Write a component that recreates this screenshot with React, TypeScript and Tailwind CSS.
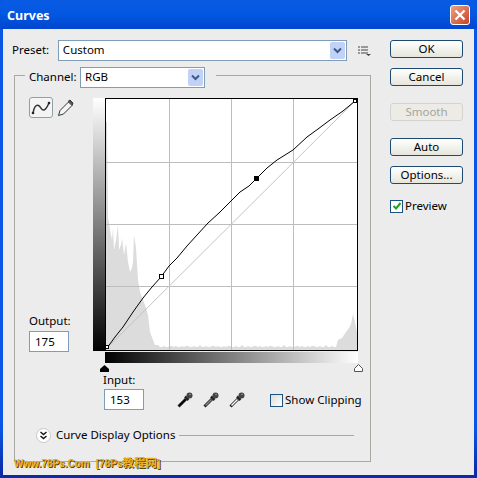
const font = "[font-family:'Noto_Sans',Tahoma,sans-serif]";

const curve =
  "107,348 115,337 123,327 133,312 143,298 152,287 161,277 169,266 177,258 187,246 197,235 208,223 219,213 230,202 240,192 249,186 257,178 267,168 277,160 293,150 307,137 318,129 330,120 343,111 355,101";

// floor of the histogram, small jitter so the top edge looks noisy
const floor = Array.from({ length: 90 }, (_, i) => {
  const x = 158 + i * 2;
  const y = 347 - (i % 3 === 0 ? 1 : 0) - (i % 7 === 0 ? 1 : 0);
  return `${x},${y}`;
}).join(" ");

const histogram =
  "106,350 106,122 107,122 108,217 110,230 112,240 113,228 114,250 116,240 118,225 119,250 121,245 122,238 124,255 126,243 128,262 130,272 132,268 133,262 134,235 136,248 138,280 140,292 143,300 146,308 148,315 150,332 153,340 155,345 " +
  floor +
  " 338,340 342,338 346,332 349,328 351,324 353,314 355,322 357,332 357,350";

function PushButton({ label, disabled, className }: { label: string; disabled?: boolean; className?: string }) {
  return (
    <button
      className={`h-[18px] w-[73px] rounded-[3px] border text-[11.5px] leading-none ${
        disabled
          ? "border-[#d4d4cf] bg-[#ecebe6] text-[#a5a59c]"
          : "border-[#1c4a72] bg-gradient-to-b from-white to-[#e6e6dc] text-black"
      } ${className ?? ""}`}
    >
      {label}
    </button>
  );
}

function ComboBox({ value, className }: { value: string; className: string }) {
  return (
    <div className={`flex items-center border border-[#7f9db9] bg-white pl-[4px] pr-px ${className}`}>
      <span className="flex-1 pb-[2px] text-black">{value}</span>
      <span className="flex h-[17px] w-[15px] items-center justify-center rounded-[2px] bg-[#c1d2f6]">
        <svg width="9" height="7" viewBox="0 0 9 7">
          <path d="M1 1.500 4.500 5 8 1.500" fill="none" stroke="#3c5a8c" strokeWidth="2" />
        </svg>
      </span>
    </div>
  );
}

function Eyedropper({ fill }: { fill: string }) {
  return (
    <svg width="17" height="17" viewBox="0 0 17 17">
      <path d="M1.500 15.500 9 8" stroke="#222" strokeWidth="3" />
      <path d="M2.500 14.500 8.500 8.500" stroke={fill} strokeWidth="1.500" />
      <path d="M8 5.500 11.500 9" stroke="#222" strokeWidth="2.500" />
      <circle cx="12.500" cy="4.500" r="3" fill="#444" />
      <circle cx="13" cy="3.500" r="0.800" fill="#999" />
    </svg>
  );
}

function CurveGraph() {
  return (
    <svg width="272" height="279" viewBox="92 97 272 279" className="block shrink-0">
      <defs>
        <linearGradient id="vert" x1="0" y1="0" x2="0" y2="1">
          <stop offset="0" stopColor="#fff" />
          <stop offset="1" stopColor="#000" />
        </linearGradient>
        <linearGradient id="horiz" x1="0" y1="0" x2="1" y2="0">
          <stop offset="0" stopColor="#000" />
          <stop offset="1" stopColor="#fff" />
        </linearGradient>
      </defs>
      <rect x="93" y="98" width="12" height="253" fill="url(#vert)" />
      <rect x="105" y="352" width="253" height="11" fill="url(#horiz)" />
      <rect x="105.500" y="98.500" width="252" height="252" fill="#fff" />
      <polygon points={histogram} fill="#dcdcdc" />
      {[169, 231, 293].map((x) => (
        <line key={x} x1={x + 0.5} y1="99" x2={x + 0.5} y2="350" stroke="#bdbdbd" />
      ))}
      {[162, 224, 286].map((y) => (
        <line key={y} x1="106" y1={y + 0.5} x2="357" y2={y + 0.5} stroke="#bdbdbd" />
      ))}
      <line x1="107" y1="348" x2="355" y2="101" stroke="#c4c4c4" />
      <polyline points={curve} fill="none" stroke="#000" strokeWidth="1" />
      <rect x="105.500" y="98.500" width="252" height="252" fill="none" stroke="#000" />
      <rect x="105.500" y="345.500" width="3" height="3" fill="#fff" stroke="#000" />
      <rect x="353.500" y="99.500" width="3" height="3" fill="#fff" stroke="#000" />
      <rect x="159.500" y="274.500" width="4" height="4" fill="#fff" stroke="#000" />
      <rect x="254" y="176" width="5" height="5" fill="#000" />
      <path d="M100 372v-3l4.500-4 4.500 4v3z" fill="#000" />
      <path d="M354.500 371.500v-3l4-4 4 4v3z" fill="#fff" stroke="#555" />
    </svg>
  );
}

export default function App() {
  return (
    <div className={`flex h-[478px] w-[477px] flex-col overflow-hidden bg-gradient-to-b from-[#0a55e4] from-90% to-[#0a2aa8] to-[99%] ${font}`}>
      {/* title bar */}
      <div className="flex h-[29px] items-center justify-between rounded-t-[7px] bg-gradient-to-b from-[#0a5be4] via-[#0257e0] to-[#0246cf] px-[7px]">
        <span className="pt-[3px] text-[12.5px] font-bold text-white">Curves</span>
        <span className="flex size-[20px] items-center justify-center rounded-[3px] border border-white bg-gradient-to-br from-[#e8a088] to-[#c8401c]">
          <svg width="12" height="12" viewBox="0 0 12 12">
            <path d="M1.500 1.500 10.500 10.500M10.500 1.500 1.500 10.500" stroke="#fff" strokeWidth="2.200" />
          </svg>
        </span>
      </div>

      {/* body */}
      <div className="mx-[3px] mb-[3px] flex flex-1 bg-[#ececec] text-[11.5px] leading-[18px] text-black">
        <div className="w-[368px]">
          <div className="mt-[11px] flex items-center pl-[9px]">
            <span className="w-[46px] pb-[2px]">Preset:</span>
            <ComboBox value="Custom" className="h-[21px] w-[290px]" />
            <svg width="13" height="10" viewBox="0 0 13 10" className="ml-[11px]">
              <path d="M0 1h2M0 4h2M0 7h2M3 1h7M3 4h7M3 7h7" stroke="#444" />
              <path d="M8 8h5l-2.500 2z" fill="#444" />
            </svg>
          </div>

          {/* channel group */}
          <div className="relative ml-[11px] mt-[14px] h-[387px] w-[357px] border border-[#a9a9a4] pl-[14px]">
            <div className="-ml-[4px] -mt-[9px] flex w-[191px] items-center bg-[#ececec] pl-[4px]">
              <span className="w-[51px] pb-[2px]">Channel:</span>
              <ComboBox value="RGB" className="h-[21px] w-[125px]" />
            </div>
            <div className="mt-[9px] flex">
              <div className="flex h-[255px] w-[63px] shrink-0 flex-col">
                <div className="flex items-center gap-[4px]">
                  <span className="flex h-[21px] w-[24px] items-center justify-center rounded-[3px] border border-[#8fa0a8] bg-[#f4f4f4]">
                    <svg width="20" height="14" viewBox="0 0 20 14">
                      <path d="M2 12C3 6 5 3.500 7.500 4.500S10.500 10 13 9 16.500 5 18 2" fill="none" stroke="#333" strokeWidth="1.500" />
                      <circle cx="2" cy="12" r="1.300" fill="#222" />
                      <circle cx="18" cy="2" r="1.300" fill="#222" />
                    </svg>
                  </span>
                  <svg width="17" height="18" viewBox="0 0 17 18">
                    <path d="M1.500 16.500 3 11.500 11.500 3 15 6.500 6.500 15Z" fill="#f4f4f4" stroke="#333" />
                    <path d="M11 2.500 13 1 16 4 15 6.500" fill="#555" stroke="#333" />
                  </svg>
                </div>
                <span className="mt-auto leading-[16px]">Output:</span>
                <div className="mt-[2px] flex h-[21px] w-[40px] shrink-0 items-center border border-[#7f9db9] bg-white pl-[5px]">175</div>
              </div>
              <CurveGraph />
            </div>
            <div className="-mt-[4px] flex items-end pl-[75px]">
              <div className="flex flex-col">
                <span className="-ml-px leading-[16px]">Input:</span>
                <div className="mt-px flex h-[21px] w-[40px] items-center border border-[#7f9db9] bg-white pl-[5px]">153</div>
              </div>
              <div className="mb-[2px] ml-[33px] flex gap-[9px]">
                <Eyedropper fill="#000" />
                <Eyedropper fill="#888" />
                <Eyedropper fill="#fff" />
              </div>
              <div className="mb-px ml-[24px] flex items-center gap-[2px]">
                <span className="size-[13px] border border-[#1c5180] bg-gradient-to-br from-[#dcdcd7] to-white" />
                <span className="whitespace-nowrap">Show Clipping</span>
              </div>
            </div>
            <div className="mt-[16px] flex items-center pl-[7px] pr-[16px]">
              <span className="flex size-[15px] shrink-0 items-center justify-center rounded-full border border-[#c8c8c8] bg-white">
                <svg width="9" height="9" viewBox="0 0 9 9">
                  <path d="M1.500 1 4.500 3.500 7.500 1M1.500 5 4.500 7.500 7.500 5" fill="none" stroke="#111" strokeWidth="1.400" />
                </svg>
              </span>
              <span className="ml-[5px] whitespace-nowrap">Curve Display Options</span>
              <span className="ml-[4px] h-px flex-1 bg-[#a9a9a4]" />
            </div>
            {/* watermark sits over the group border */}
            <span className="absolute -bottom-[9px] -left-[1px] whitespace-nowrap text-[10px] leading-[13px] font-bold text-[#e8b020] [font-family:'Liberation_Sans','Noto_Sans_CJK_SC',sans-serif] [text-shadow:1px_1px_0_#5a4200]">
              Www.78Ps.Com<span className="ml-[6px]">[78Ps<span className="text-[11.5px]">教程网</span>]</span>
            </span>
          </div>
        </div>

        {/* buttons */}
        <div className="flex flex-col items-start pl-[19px] pt-[11px]">
          <PushButton label="OK" />
          <PushButton label="Cancel" className="mt-[10px]" />
          <PushButton label="Smooth" disabled className="mt-[17px]" />
          <PushButton label="Auto" className="mt-[17px]" />
          <PushButton label="Options..." className="mt-[10px]" />
          <div className="mt-[13px] flex items-center gap-[2px]">
            <span className="flex size-[13px] items-center justify-center border border-[#1c5180] bg-white">
              <svg width="10" height="10" viewBox="0 0 10 10">
                <path d="M1.500 5 4 7.500 8.500 2" fill="none" stroke="#21a121" strokeWidth="2" />
              </svg>
            </span>
            <span>Preview</span>
          </div>
        </div>
      </div>
    </div>
  );
}
